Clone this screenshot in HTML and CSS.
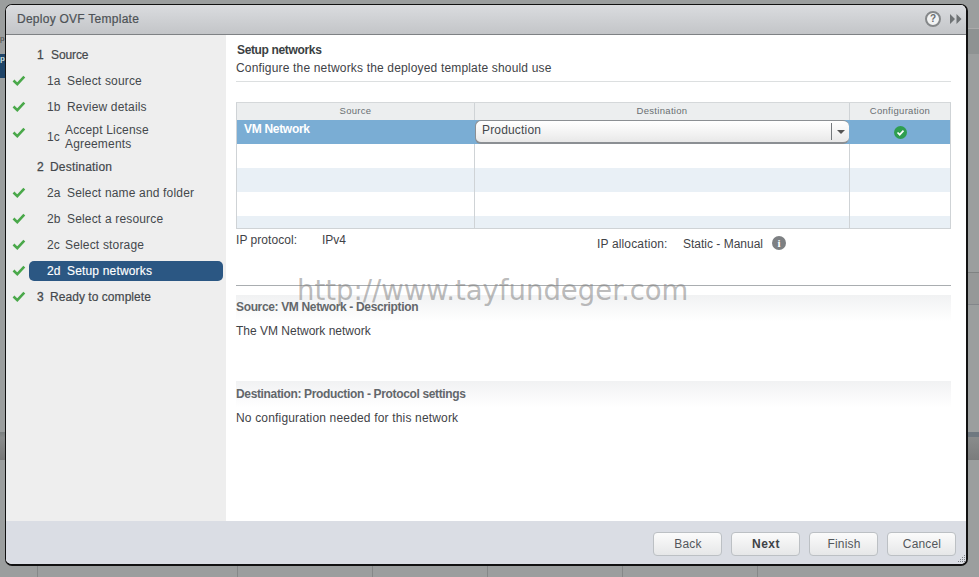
FILE: index.html
```html
<!DOCTYPE html>
<html lang="en">
<head>
<meta charset="utf-8">
<title>Deploy OVF Template</title>
<link rel="stylesheet" href="styles.css">
</head>
<body>
<div class="backdrop">
  <div class="bg-left-label">p</div>
  <div class="bg-left-tab">p</div>
  <div class="bg-left-band"></div>
  <div class="bg-right-band1"></div>
  <div class="bg-right-band2"></div>
  <div class="bg-right-band3"></div>
  <div class="bg-tick t1"></div>
  <div class="bg-tick t2"></div>
  <div class="bg-tick t3"></div>
  <div class="bg-tick t4"></div>
  <div class="bg-tick t5"></div>
  <div class="bg-tick t6"></div>
</div>
<div class="dialog">
  <header class="titlebar">
    <span class="title">Deploy OVF Template</span>
    <div class="title-icons">
      <span class="help">?</span>
      <svg class="collapse" width="12" height="10" viewBox="0 0 12 10"><path d="M0 0l5 5-5 5zM6.500 0l5 5-5 5z" fill="#6f7375"/></svg>
    </div>
  </header>
  <div class="body">
    <nav class="sidebar">
      <div class="step group source"><span class="num">1</span><span>Source</span></div>
      <div class="step sub done"><svg class="check" width="14" height="11" viewBox="0 0 14 11"><path d="M1.500 5.500l3.800 3.600 7-7.500" fill="none" stroke="#4aa84a" stroke-width="2.600"/></svg><span class="num">1a</span><span>Select source</span></div>
      <div class="step sub done"><svg class="check" width="14" height="11" viewBox="0 0 14 11"><path d="M1.500 5.500l3.800 3.600 7-7.500" fill="none" stroke="#4aa84a" stroke-width="2.600"/></svg><span class="num">1b</span><span>Review details</span></div>
      <div class="step sub done tall"><svg class="check" width="14" height="11" viewBox="0 0 14 11"><path d="M1.500 5.500l3.800 3.600 7-7.500" fill="none" stroke="#4aa84a" stroke-width="2.600"/></svg><span class="num narrow">1c</span><span class="two-line">Accept License<br>Agreements</span></div>
      <div class="step group dest-group"><span class="num">2</span><span>Destination</span></div>
      <div class="step sub done"><svg class="check" width="14" height="11" viewBox="0 0 14 11"><path d="M1.500 5.500l3.800 3.600 7-7.500" fill="none" stroke="#4aa84a" stroke-width="2.600"/></svg><span class="num">2a</span><span>Select name and folder</span></div>
      <div class="step sub done"><svg class="check" width="14" height="11" viewBox="0 0 14 11"><path d="M1.500 5.500l3.800 3.600 7-7.500" fill="none" stroke="#4aa84a" stroke-width="2.600"/></svg><span class="num">2b</span><span>Select a resource</span></div>
      <div class="step sub done"><svg class="check" width="14" height="11" viewBox="0 0 14 11"><path d="M1.500 5.500l3.800 3.600 7-7.500" fill="none" stroke="#4aa84a" stroke-width="2.600"/></svg><span class="num narrow">2c</span><span>Select storage</span></div>
      <div class="step sub done active"><svg class="check" width="14" height="11" viewBox="0 0 14 11"><path d="M1.500 5.500l3.800 3.600 7-7.500" fill="none" stroke="#4aa84a" stroke-width="2.600"/></svg><span class="pill"><span class="num">2d</span><span>Setup networks</span></span></div>
      <div class="step group done"><svg class="check" width="14" height="11" viewBox="0 0 14 11"><path d="M1.500 5.500l3.800 3.600 7-7.500" fill="none" stroke="#4aa84a" stroke-width="2.600"/></svg><span class="num">3</span><span>Ready to complete</span></div>
    </nav>
    <main class="content">
      <h2 class="heading">Setup networks</h2>
      <p class="subheading">Configure the networks the deployed template should use</p>
      <div class="table">
        <div class="row head"><div class="cell c1">Source</div><div class="cell c2">Destination</div><div class="cell c3">Configuration</div></div>
        <div class="row selected">
          <div class="cell c1 vm">VM Network</div>
          <div class="cell c2 dest"><div class="select"><span>Production</span><span class="arrow-box"><span class="arrow"></span></span></div></div>
          <div class="cell c3 status"><svg width="13" height="13" viewBox="0 0 13 13"><circle cx="6.500" cy="6.500" r="6.500" fill="#2f9e4f"/><path d="M3.500 6.500l2.200 2.200 3.800-4" fill="none" stroke="#fff" stroke-width="1.700"/></svg></div>
        </div>
        <div class="row plain"><div class="cell c1"></div><div class="cell c2"></div><div class="cell c3"></div></div>
        <div class="row alt"><div class="cell c1"></div><div class="cell c2"></div><div class="cell c3"></div></div>
        <div class="row plain"><div class="cell c1"></div><div class="cell c2"></div><div class="cell c3"></div></div>
        <div class="row alt last"><div class="cell c1"></div><div class="cell c2"></div><div class="cell c3"></div></div>
      </div>
      <div class="ip-row">
        <div class="ip-left"><span class="ip-label">IP protocol:</span><span>IPv4</span></div>
        <div class="ip-right"><span class="alloc-label">IP allocation:</span><span class="alloc-value">Static - Manual</span><span class="info">i</span></div>
      </div>
      <section class="panel first">
        <h3 class="panel-title">Source: VM Network - Description</h3>
        <p class="panel-text tight">The VM Network network</p>
      </section>
      <section class="panel second">
        <h3 class="panel-title">Destination: Production - Protocol settings</h3>
        <p class="panel-text">No configuration needed for this network</p>
      </section>
      <div class="watermark">http://www.tayfundeger.com</div>
    </main>
  </div>
  <footer class="footer">
    <button class="btn">Back</button>
    <button class="btn primary">Next</button>
    <button class="btn">Finish</button>
    <button class="btn">Cancel</button>
    <svg class="grip" width="10" height="10" viewBox="0 0 10 10"><path d="M8 1h1v1H8zM6 3h1v1H6zM8 3h1v1H8zM4 5h1v1H4zM6 5h1v1H6zM8 5h1v1H8zM2 7h1v1H2zM4 7h1v1H4zM6 7h1v1H6zM8 7h1v1H8z" fill="#7d8287"/></svg>
  </footer>
</div>
</body>
</html>
```
FILE: styles.css
```css
* { box-sizing: border-box; }
html, body { margin: 0; height: 100%; }
body {
  width: 979px;
  height: 577px;
  overflow: hidden;
  position: relative;
  background: #9b9e9e;
  font-family: "Liberation Sans", Arial, sans-serif;
  font-size: 12px;
  letter-spacing: 0.17px;
  color: #3f4347;
  padding: 4px 0 0 5px;
}
.backdrop { position: absolute; inset: 0; overflow: hidden; }
.bg-left-label { position: absolute; left: 0; top: 34px; font-size: 8px; letter-spacing: 0; color: #444; }
.bg-left-tab { position: absolute; left: 0; top: 54px; width: 6px; height: 24px; background: #1f4468; color: #cdd; font-size: 8px; letter-spacing: 0; font-weight: bold; }
.bg-left-band { position: absolute; left: 0; top: 432px; width: 6px; height: 28px; background: linear-gradient(#7b8080, #8a8c8c 20%, #777); }
.bg-right-band1 { position: absolute; left: 967px; top: 28px; width: 12px; height: 26px; background: #8e9292; border-top: 1px solid #aaa; }
.bg-right-band2 { position: absolute; left: 967px; top: 272px; width: 12px; height: 33px; background: #969898; border-top: 1px solid #7f8282; border-bottom: 1px solid #83868a; }
.bg-right-band3 { position: absolute; left: 967px; top: 432px; width: 12px; height: 28px; background: linear-gradient(#6f7880 0 5px, #8a8c8c 5px, #7a7c7c); }
.bg-tick { position: absolute; top: 566px; width: 1px; height: 11px; background: #858888; }
.t1 { left: 37px; } .t2 { left: 237px; } .t3 { left: 372px; } .t4 { left: 487px; } .t5 { left: 622px; } .t6 { left: 757px; }

.dialog {
  position: relative;
  width: 963px;
  height: 562px;
  border: 1px solid #111;
  border-width: 1px 2px 2px 1px;
  border-radius: 7px;
  overflow: hidden;
  background: #fff;
  display: flex;
  flex-direction: column;
}
.titlebar {
  height: 30px;
  flex: none;
  background: linear-gradient(#dadcdf, #c3c5c8);
  border-bottom: 1px solid #7e8184;
  display: flex;
  align-items: center;
  justify-content: space-between;
  padding: 0 4px 2px 11px;
}
.title { font-size: 12px; font-weight: normal; letter-spacing: 0.26px; color: #4d5256; -webkit-text-stroke: 0.2px #4d5256; }
.title-icons { display: flex; align-items: center; gap: 9px; }
.help {
  width: 16px; height: 16px; border-radius: 50%;
  background: #f2f3f3; border: 2px solid #85888a;
  color: #6a6d70; font-size: 10px; font-weight: bold; letter-spacing: 0;
  display: flex; align-items: center; justify-content: center;
}
.body { flex: 1; display: flex; min-height: 0; }
.sidebar {
  width: 220px;
  flex: none;
  background: #eeeeee;
  padding-top: 7px;
  display: flex;
  flex-direction: column;
}
.step { position: relative; height: 26px; flex: none; display: flex; align-items: center; color: #44484c; }
.step .check { position: absolute; left: 6px; top: 7px; }
.group { padding-left: 31px; letter-spacing: 0.05px; }
.group .num { width: 13px; -webkit-text-stroke: 0.3px #44484c; }
.group span:last-child { -webkit-text-stroke: 0.2px #44484c; }
.source { letter-spacing: -0.1px; }
.source .num { width: 14px; }
.dest-group { letter-spacing: 0.2px; }
.step.sub { padding-left: 41px; }
.sub .num { width: 20px; flex: none; }
.sub .num.narrow { width: 18px; }
.step.tall { height: 34px; }
.two-line { line-height: 14px; }
.step.sub.active { padding-left: 23px; }
.pill {
  width: 194px; height: 20px;
  background: #2b5783;
  border-radius: 5px;
  color: #fff;
  display: flex;
  align-items: center;
  padding-left: 18px;
  -webkit-text-stroke: 0.15px #fff;
}
.content {
  flex: 1;
  position: relative;
  padding: 8px 15px 0 10px;
  min-width: 0;
}
.heading { margin: 0 0 0 1px; font-size: 12px; font-weight: bold; letter-spacing: -0.35px; color: #3b3f43; line-height: 14px; }
.subheading { margin: 4px 0 0; line-height: 14px; color: #3f4347; padding-bottom: 6px; border-bottom: 1px solid #dcdfe0; }
.table { margin-top: 20px; width: 715px; border: 1px solid #cfd3d6; border-top-color: #d5d8da; }
.row { display: flex; height: 24px; }
.row.head { height: 17px; background: #eceeef; }
.row.last { height: 12px; }
.cell { height: 100%; border-right: 1px solid #cfd3d6; }
.cell.c3 { border-right: 0; }
.c1 { width: 238px; flex: none; }
.c2 { width: 375px; flex: none; }
.c3 { flex: 1; }
.head .cell { font-size: 9.500px; letter-spacing: 0.3px; color: #6a6e72; text-align: center; line-height: 15px; }
.selected { background: #7aadd4; }
.selected .cell { border-right-color: transparent; }
.vm { color: #fff; font-weight: bold; letter-spacing: -0.3px; padding: 2px 0 0 7px; line-height: 14px; }
.select {
  height: 24px;
  background: linear-gradient(#fff, #f2f2f2 60%, #e8e8e8);
  border: 1px solid #8b8f93;
  border-width: 1px 0 2px 1px;
  border-radius: 6px;
  padding-left: 6px;
  display: flex;
  justify-content: space-between;
  line-height: 19px;
  color: #44484c;
  position: relative;
  z-index: 1;
}
.arrow-box { width: 18px; margin: 2px 0; border-left: 1px solid #74787c; display: flex; align-items: center; justify-content: center; }
.arrow { width: 0; height: 0; border: 4px solid transparent; border-top: 4px solid #555; border-bottom: 0; }
.status { display: flex; align-items: center; justify-content: center; }
.alt { background: #e9f0f6; }
.ip-row { display: flex; margin-top: 4px; line-height: 14px; height: 52px; }
.ip-left { width: 361px; display: flex; letter-spacing: 0; }
.ip-label { width: 86px; letter-spacing: 0.05px; }
.ip-right { display: flex; align-items: flex-start; margin-top: 4px; }
.alloc-label { width: 86px; letter-spacing: 0.15px; }
.alloc-value { letter-spacing: 0; }
.info {
  width: 14px; height: 14px; margin-left: 9px; margin-top: -1px;
  background: #7d8083; color: #fff; border-radius: 50%;
  font: bold 11px/14px "Liberation Serif", serif;
  text-align: center;
}
.panel { border-top: 1px solid #a9adb0; }
.panel-title {
  margin: 0;
  font-size: 12px;
  font-weight: bold;
  letter-spacing: -0.35px;
  color: #63676b;
  line-height: 14px;
}
.panel-text { margin: 10px 0 0; line-height: 14px; }
.panel-text.tight { letter-spacing: 0; }
.panel.first {
  width: 715px;
  padding-top: 14px;
  height: 96px;
  background: linear-gradient(#fff 0 9px, #f1f2f3 9px, #fff 36px);
}
.panel.second {
  border-top: 0;
  width: 715px;
  height: 60px;
  padding-top: 6px;
  background: linear-gradient(#f1f2f3, #fff 26px);
}
.watermark {
  position: absolute;
  left: 71px;
  top: 239px;
  font-family: "DejaVu Sans", sans-serif;
  font-size: 27.500px;
  letter-spacing: 0;
  line-height: 32px;
  white-space: nowrap;
  color: rgba(130, 130, 130, 0.55);
}
.footer {
  height: 43px;
  flex: none;
  background: #dadde4;
  display: flex;
  align-items: flex-start;
  justify-content: flex-end;
  gap: 9px;
  padding: 11px 10px 0 0;
  position: relative;
}
.btn {
  width: 69px; height: 24px;
  padding: 0 0 0 1px;
  border: 1px solid #bcc0c4;
  border-radius: 4px;
  background: linear-gradient(#fbfbfb, #e6e7e8);
  color: #53575b;
  font: 12px "Liberation Sans", Arial, sans-serif;
  letter-spacing: 0.17px;
}
.btn.primary { font-weight: bold; letter-spacing: 0.5px; color: #3f4347; }
.grip { position: absolute; right: 0; bottom: 0; }
```
